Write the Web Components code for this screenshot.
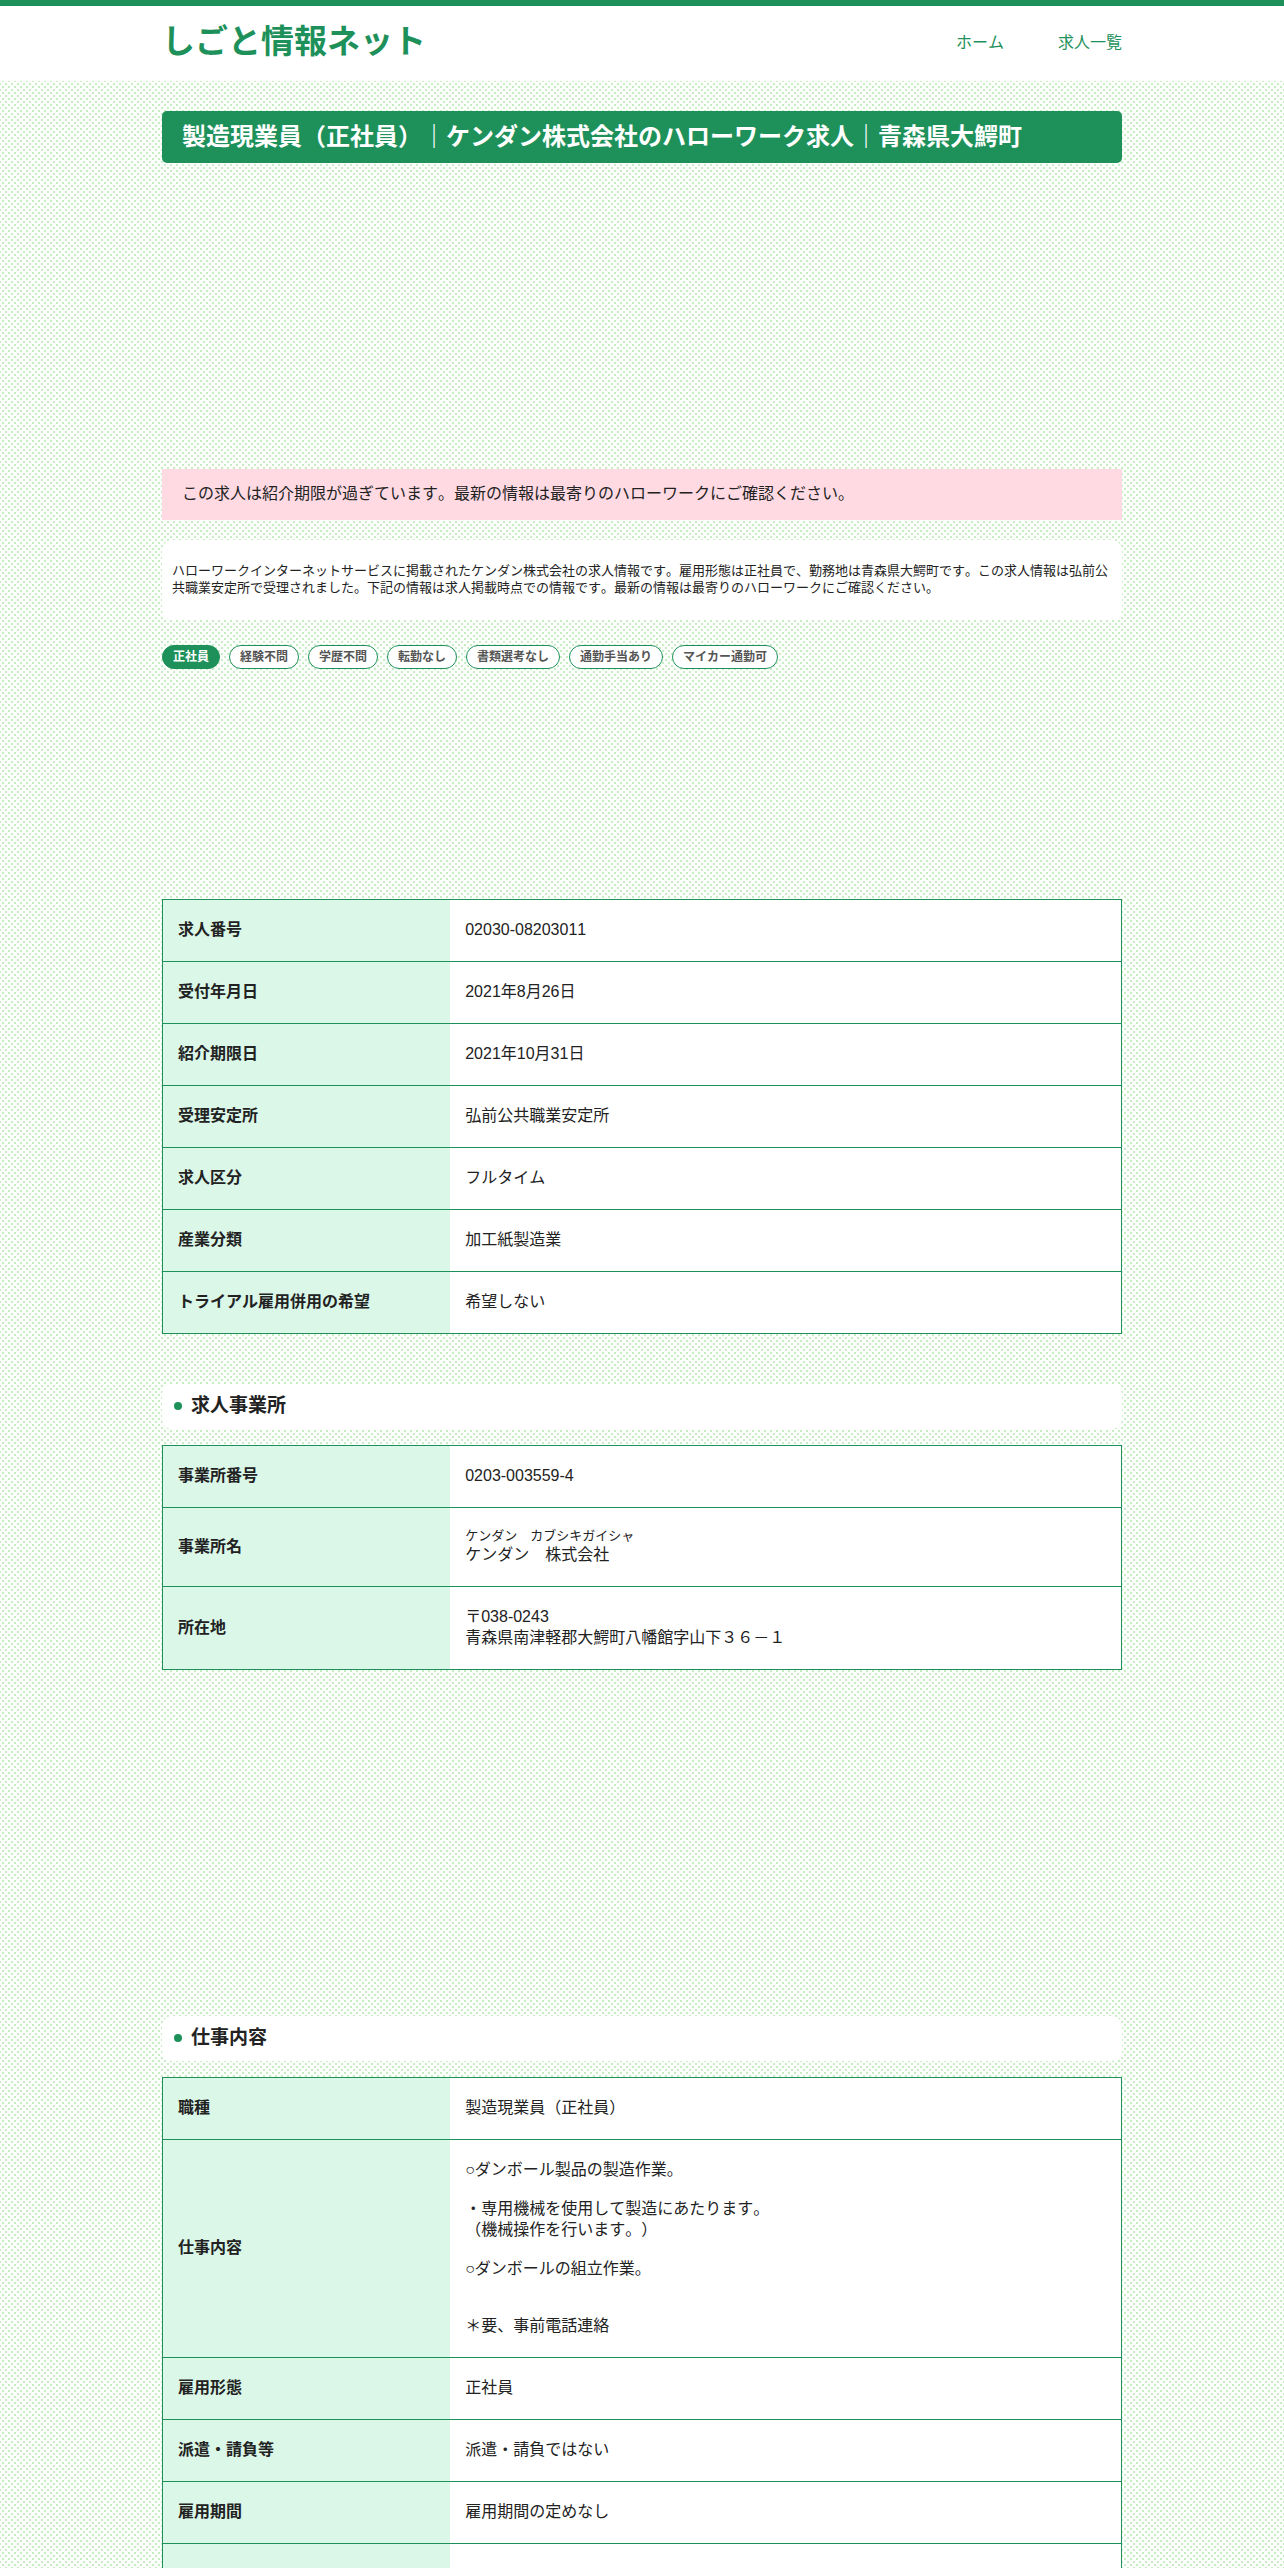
<!DOCTYPE html>
<html lang="ja">
<head>
<meta charset="utf-8">
<meta name="viewport" content="width=device-width, initial-scale=1">
<title>製造現業員（正社員）｜ケンダン株式会社のハローワーク求人｜青森県大鰐町</title>
<style>
  :root {
    --green: #1e915b;
    --mint: #daf7e8;
    --pink: #ffdae2;
  }
  body {
    margin: 0;
    color: #222;
    font: 16px/21px "Liberation Sans", "Noto Sans CJK JP", sans-serif;
    font-kerning: none;
    text-spacing-trim: space-all;
    background-color: #fdfffd;
    background-image:
      radial-gradient(circle, #c8ecc4 1px, transparent 1px),
      radial-gradient(circle, #c8ecc4 1px, transparent 1px);
    background-position: 0 0, 3px 3px;
    background-size: 6px 6px;
  }
  main {
    display: block;
    max-width: 960px;
    margin: 0 auto;
    padding: 30px 0;
  }
</style>
</head>
<body>
<site-header name="しごと情報ネット">
  <a href="#home">ホーム</a>
  <a href="#list">求人一覧</a>
</site-header>

<main>
  <page-title>製造現業員（正社員）｜ケンダン株式会社のハローワーク求人｜青森県大鰐町</page-title>
  <ad-space style="--height: 306px"></ad-space>
  <expired-notice>この求人は紹介期限が過ぎています。最新の情報は最寄りのハローワークにご確認ください。</expired-notice>
  <job-summary>ハローワークインターネットサービスに掲載されたケンダン株式会社の求人情報です。雇用形態は正社員で、勤務地は青森県大鰐町です。この求人情報は弘前公共職業安定所で受理されました。下記の情報は求人掲載時点での情報です。最新の情報は最寄りのハローワークにご確認ください。</job-summary>
  <tag-list main="正社員" items="経験不問,学歴不問,転勤なし,書類選考なし,通勤手当あり,マイカー通勤可"></tag-list>
  <ad-space style="--height: 230px"></ad-space>
  <info-table data="outline"></info-table>
  <section-title>求人事業所</section-title>
  <info-table data="office"></info-table>
  <ad-space style="--height: 296px"></ad-space>
  <section-title>仕事内容</section-title>
  <info-table data="work"></info-table>
</main>

<script>
const tables = {
  outline: [
    ["求人番号", "02030-08203011"],
    ["受付年月日", "2021年8月26日"],
    ["紹介期限日", "2021年10月31日"],
    ["受理安定所", "弘前公共職業安定所"],
    ["求人区分", "フルタイム"],
    ["産業分類", "加工紙製造業"],
    ["トライアル雇用併用の希望", "希望しない"],
  ],
  office: [
    ["事業所番号", "0203-003559-4"],
    ["事業所名", "<small>ケンダン　カブシキガイシャ</small>ケンダン　株式会社"],
    ["所在地", "〒038-0243<br>青森県南津軽郡大鰐町八幡館字山下３６－１"],
  ],
  work: [
    ["職種", "製造現業員（正社員）"],
    [
      "仕事内容",
      `<p>○ダンボール製品の製造作業。</p>
       <p>・専用機械を使用して製造にあたります。<br>（機械操作を行います。）</p>
       <p>○ダンボールの組立作業。</p>
       <p class="note">＊要、事前電話連絡</p>`,
    ],
    ["雇用形態", "正社員"],
    ["派遣・請負等", "派遣・請負ではない"],
    ["雇用期間", "雇用期間の定めなし"],
    ["", ""],
  ],
};

class SiteHeader extends HTMLElement {
  constructor() {
    super();
    const shadow = this.attachShadow({ mode: "open" });
    shadow.innerHTML = `
      <style>
        :host {
          display: block;
          background: #fff;
          border-top: 6px solid var(--green);
        }
        header {
          display: flex;
          align-items: center;
          justify-content: space-between;
          max-width: 960px;
          margin: 0 auto;
          padding: 16px 0 19px;
        }
        .logo {
          color: var(--green);
          font-size: 33px;
          font-weight: bold;
          line-height: 40px;
          text-decoration: none;
        }
        nav {
          display: flex;
          gap: 54px;
        }
        ::slotted(a) {
          color: var(--green);
          text-decoration: none;
        }
      </style>
      <header>
        <a class="logo" href="#home"></a>
        <nav><slot></slot></nav>
      </header>
    `;
    shadow.querySelector(".logo").textContent = this.getAttribute("name");
  }
}

class PageTitle extends HTMLElement {
  constructor() {
    super();
    this.attachShadow({ mode: "open" }).innerHTML = `
      <style>
        :host { display: block; }
        h1 {
          margin: 0;
          padding: 10px 20px;
          color: #fff;
          background: var(--green);
          border-radius: 5px;
          font-size: 24px;
          line-height: 32px;
        }
      </style>
      <h1><slot></slot></h1>
    `;
  }
}

// Keeps the room for an advert
class AdSpace extends HTMLElement {
  constructor() {
    super();
    this.attachShadow({ mode: "open" }).innerHTML = `
      <style>
        :host {
          display: block;
          height: var(--height, 280px);
        }
      </style>
    `;
  }
}

class ExpiredNotice extends HTMLElement {
  constructor() {
    super();
    this.attachShadow({ mode: "open" }).innerHTML = `
      <style>
        :host { display: block; }
        p {
          margin: 0;
          padding: 14px 20px 16px;
          background: var(--pink);
        }
      </style>
      <p><slot></slot></p>
    `;
  }
}

class JobSummary extends HTMLElement {
  constructor() {
    super();
    this.attachShadow({ mode: "open" }).innerHTML = `
      <style>
        :host {
          display: block;
          margin: 20px 0 25px;
        }
        p {
          margin: 0;
          padding: 22px 10px 24px;
          background: #fff;
          border-radius: 10px;
          font-size: 13px;
          line-height: 17px;
        }
      </style>
      <p><slot></slot></p>
    `;
  }
}

class TagList extends HTMLElement {
  constructor() {
    super();
    const shadow = this.attachShadow({ mode: "open" });
    shadow.innerHTML = `
      <style>
        :host { display: block; }
        ul {
          display: flex;
          flex-wrap: wrap;
          gap: 9px;
          margin: 0;
          padding: 0;
          list-style: none;
        }
        li {
          padding: 3px 10px;
          color: #555;
          background: #fff;
          border: 1px solid var(--green);
          border-radius: 12px;
          font-size: 12px;
          font-weight: bold;
          line-height: 16px;
        }
        .main {
          color: #fff;
          background: var(--green);
        }
      </style>
      <ul></ul>
    `;
    const items = this.getAttribute("items").split(",");
    shadow.querySelector("ul").innerHTML =
      `<li class="main">${this.getAttribute("main")}</li>` +
      items.map((item) => `<li>${item}</li>`).join("");
  }
}

class SectionTitle extends HTMLElement {
  constructor() {
    super();
    this.attachShadow({ mode: "open" }).innerHTML = `
      <style>
        :host {
          display: block;
          margin: 50px 0 16px;
        }
        h2 {
          display: flex;
          align-items: center;
          gap: 9px;
          margin: 0;
          padding: 9px 12px 11px;
          background: #fff;
          border-radius: 10px;
          font-size: 19px;
          line-height: 25px;
        }
        h2::before {
          content: "";
          width: 8px;
          height: 8px;
          border-radius: 50%;
          background: var(--green);
        }
      </style>
      <h2><slot></slot></h2>
    `;
  }
}

class InfoTable extends HTMLElement {
  constructor() {
    super();
    const shadow = this.attachShadow({ mode: "open" });
    shadow.innerHTML = `
      <style>
        :host { display: block; }
        table {
          width: 100%;
          border: 1px solid var(--green);
          border-collapse: collapse;
          background: #fff;
        }
        tr {
          height: 62px;
          border-top: 1px solid var(--green);
        }
        th, td {
          padding: 19px 15px 21px;
          text-align: left;
          vertical-align: middle;
        }
        th {
          width: 30%;
          box-sizing: border-box;
          background: var(--mint);
        }
        small {
          display: block;
          font-size: 13px;
          line-height: 17px;
        }
        p { margin: 0; }
        p + p { margin-top: 18px; }
        p + .note { margin-top: 36px; }
      </style>
      <table><tbody></tbody></table>
    `;
    shadow.querySelector("tbody").innerHTML = tables[this.getAttribute("data")]
      .map(([name, value]) => `<tr><th scope="row">${name}</th><td>${value}</td></tr>`)
      .join("");
  }
}

customElements.define("site-header", SiteHeader);
customElements.define("page-title", PageTitle);
customElements.define("ad-space", AdSpace);
customElements.define("expired-notice", ExpiredNotice);
customElements.define("job-summary", JobSummary);
customElements.define("tag-list", TagList);
customElements.define("section-title", SectionTitle);
customElements.define("info-table", InfoTable);
</script>
</body>
</html>
